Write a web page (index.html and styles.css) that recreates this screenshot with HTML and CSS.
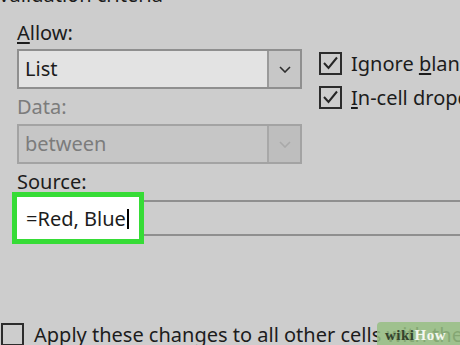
FILE: index.html
```html
<!DOCTYPE html>
<html>
<head>
<meta charset="utf-8">
<link rel="stylesheet" href="styles.css">
</head>
<body>
<div class="page">
  <div class="title">Validation criteria</div>
  <div class="top">
    <div class="left">
      <div class="label"><u>A</u>llow:</div>
      <div class="select">
        <span class="value">List</span>
        <span class="btn"><svg width="12" height="7" viewBox="0 0 12 7"><polyline points="1,1 6,6 11,1" fill="none" stroke="#2e2e2e" stroke-width="1.6"/></svg></span>
      </div>
      <div class="label disabled gap-data">Data:</div>
      <div class="select select-disabled">
        <span class="value">between</span>
        <span class="btn"><svg width="12" height="7" viewBox="0 0 12 7"><polyline points="1,1 6,6 11,1" fill="none" stroke="#a9a9a9" stroke-width="1.6"/></svg></span>
      </div>
    </div>
    <div class="right">
      <div class="check-row">
        <span class="box"><svg width="19" height="19" viewBox="0 0 19 19"><polyline points="3,9 7.5,14 16,3.5" fill="none" stroke="#262626" stroke-width="2"/></svg></span>
        <span class="check-text">Ignore <u>b</u>lank</span>
      </div>
      <div class="check-row">
        <span class="box"><svg width="19" height="19" viewBox="0 0 19 19"><polyline points="3,9 7.5,14 16,3.5" fill="none" stroke="#262626" stroke-width="2"/></svg></span>
        <span class="check-text"><u>I</u>n-cell dropdown</span>
      </div>
    </div>
  </div>
  <div class="label src-label">Source:</div>
  <div class="source">
    <span class="highlight"></span>
    <span class="src-text">=Red, Blue<span class="caret"></span></span>
  </div>
  <div class="check-row bottom-row">
    <span class="box"></span>
    <span class="check-text">Apply these changes to all other cells with the same settings</span>
  </div>
  <div class="wikihow"><span class="wiki">wiki</span><span class="how">How</span></div>
</div>
</body>
</html>
```
FILE: styles.css
```css
html, body {
  margin: 0;
  padding: 0;
}
body {
  background: #cdcdcd;
  font-family: "Noto Sans", "Open Sans", sans-serif;
  font-size: 20px;
  color: #1c1c1c;
}
.page {
  position: relative;
  width: 460px;
  height: 345px;
  overflow: hidden;
  padding-left: 17px;
  box-sizing: border-box;
}
.title {
  line-height: 24px;
  margin-top: -17px;
  margin-left: -19px;
  white-space: nowrap;
}
.top {
  display: flex;
  gap: 17px;
  margin-top: 14px;
}
.left {
  flex: none;
  width: 285px;
  display: flex;
  flex-direction: column;
}
.label {
  line-height: 24px;
  white-space: nowrap;
}
.label u, .check-text u {
  text-decoration-thickness: 2px;
  text-underline-offset: 2px;
}
.disabled {
  color: #7c7c7c;
}
.select {
  margin-top: 4px;
  height: 40px;
  box-sizing: border-box;
  border: 2px solid #8f8f8f;
  background: #e3e3e3;
  display: flex;
}
.select .value {
  flex: 1;
  padding-left: 6px;
  line-height: 36px;
}
.select .btn {
  width: 31px;
  border-left: 2px solid #9a9a9a;
  background: #c7c7c7;
  display: flex;
  align-items: center;
  justify-content: center;
}
.gap-data {
  margin-top: 6px;
}
.select-disabled {
  margin-top: 5px;
  background: #c6c6c6;
  border-color: #a3a3a3;
  color: #7c7c7c;
}
.select-disabled .btn {
  background: #bebebe;
  border-left-color: #a8a8a8;
}
.right {
  flex: none;
  padding-top: 29px;
  display: flex;
  flex-direction: column;
}
.check-row {
  height: 34px;
  display: flex;
  align-items: flex-start;
  gap: 9px;
  white-space: nowrap;
}
.box {
  margin-top: 2px;
  width: 23px;
  height: 23px;
  box-sizing: border-box;
  border: 2px solid #2c2c2c;
  flex: none;
  display: flex;
  align-items: center;
  justify-content: center;
}
.check-text {
  margin-top: 2px;
  line-height: 24px;
}
.src-label {
  margin-top: 6px;
}
.source {
  position: relative;
  margin-top: 6px;
  width: 460px;
  height: 36px;
  box-sizing: border-box;
  border-top: 2px solid #8f8f8f;
  border-bottom: 2px solid #8f8f8f;
  border-left: 2px solid #b5b5b5;
}
.highlight {
  position: absolute;
  left: -7px;
  top: -10px;
  width: 132px;
  height: 52px;
  box-sizing: border-box;
  border: 5px solid #36dc36;
  background: #ffffff;
  z-index: 1;
}
.src-text {
  position: relative;
  z-index: 2;
  display: block;
  padding-left: 7px;
  line-height: 34px;
  white-space: nowrap;
}
.caret {
  display: inline-block;
  width: 2px;
  height: 20px;
  background: #000;
  vertical-align: -3px;
  margin-left: 1px;
}
.bottom-row {
  margin-top: 85px;
  margin-left: -16px;
  gap: 10px;
}
.wikihow {
  position: absolute;
  left: 377px;
  top: 322px;
  width: 90px;
  height: 24px;
  border-radius: 4px 0 0 0;
  background: rgba(150, 190, 130, 0.85);
  padding-left: 8px;
  box-sizing: border-box;
  font-family: "Liberation Serif", serif;
  font-weight: bold;
  font-size: 15px;
  line-height: 26px;
  letter-spacing: 0.5px;
  white-space: nowrap;
}
.wiki {
  color: #34432c;
}
.how {
  color: #f4f7f0;
}
```
